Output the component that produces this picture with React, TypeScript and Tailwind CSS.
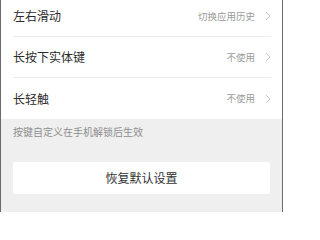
const font = { fontFamily: '"Noto Sans CJK SC", "Noto Sans", sans-serif' };

const rows = [
  { title: '左右滑动', value: '切换应用历史' },
  { title: '长按下实体键', value: '不使用' },
  { title: '长轻触', value: '不使用' },
];

function Chevron() {
  return (
    <svg width="6" height="10" viewBox="0 0 6 10" className="ml-[10px]">
      <path d="M1 1 L5 5 L1 9" fill="none" stroke="#c9c9c9" strokeWidth="1" />
    </svg>
  );
}

export default function App() {
  return (
    <div
      className="w-[283px] h-[212px] overflow-hidden bg-[#efefef] border-x border-[#6b6b6b] flex flex-col"
      style={font}
    >
      <div className="bg-white -mt-[4px]">
        {rows.map((row, i) => (
          <div key={row.title} className="pl-[12px] pr-[11px]">
            <div
              className={`h-[41px] flex items-center ${
                i < rows.length - 1 ? 'border-b border-[#ececec]' : ''
              }`}
            >
              <span className="text-[12px] text-[#2b2b2b] flex-1">{row.title}</span>
              <span className="text-[9.5px] text-[#9a9a9a]">{row.value}</span>
              <Chevron />
            </div>
          </div>
        ))}
      </div>
      <p className="mt-[6px] pl-[12px] text-[10px] text-[#8e8e8e] leading-[14px]">
        按键自定义在手机解锁后生效
      </p>
      <div className="mt-[23px] px-[12px]">
        <button className="w-full h-[32px] bg-white text-[12px] text-[#333] rounded-[2px]">
          恢复默认设置
        </button>
      </div>
    </div>
  );
}
